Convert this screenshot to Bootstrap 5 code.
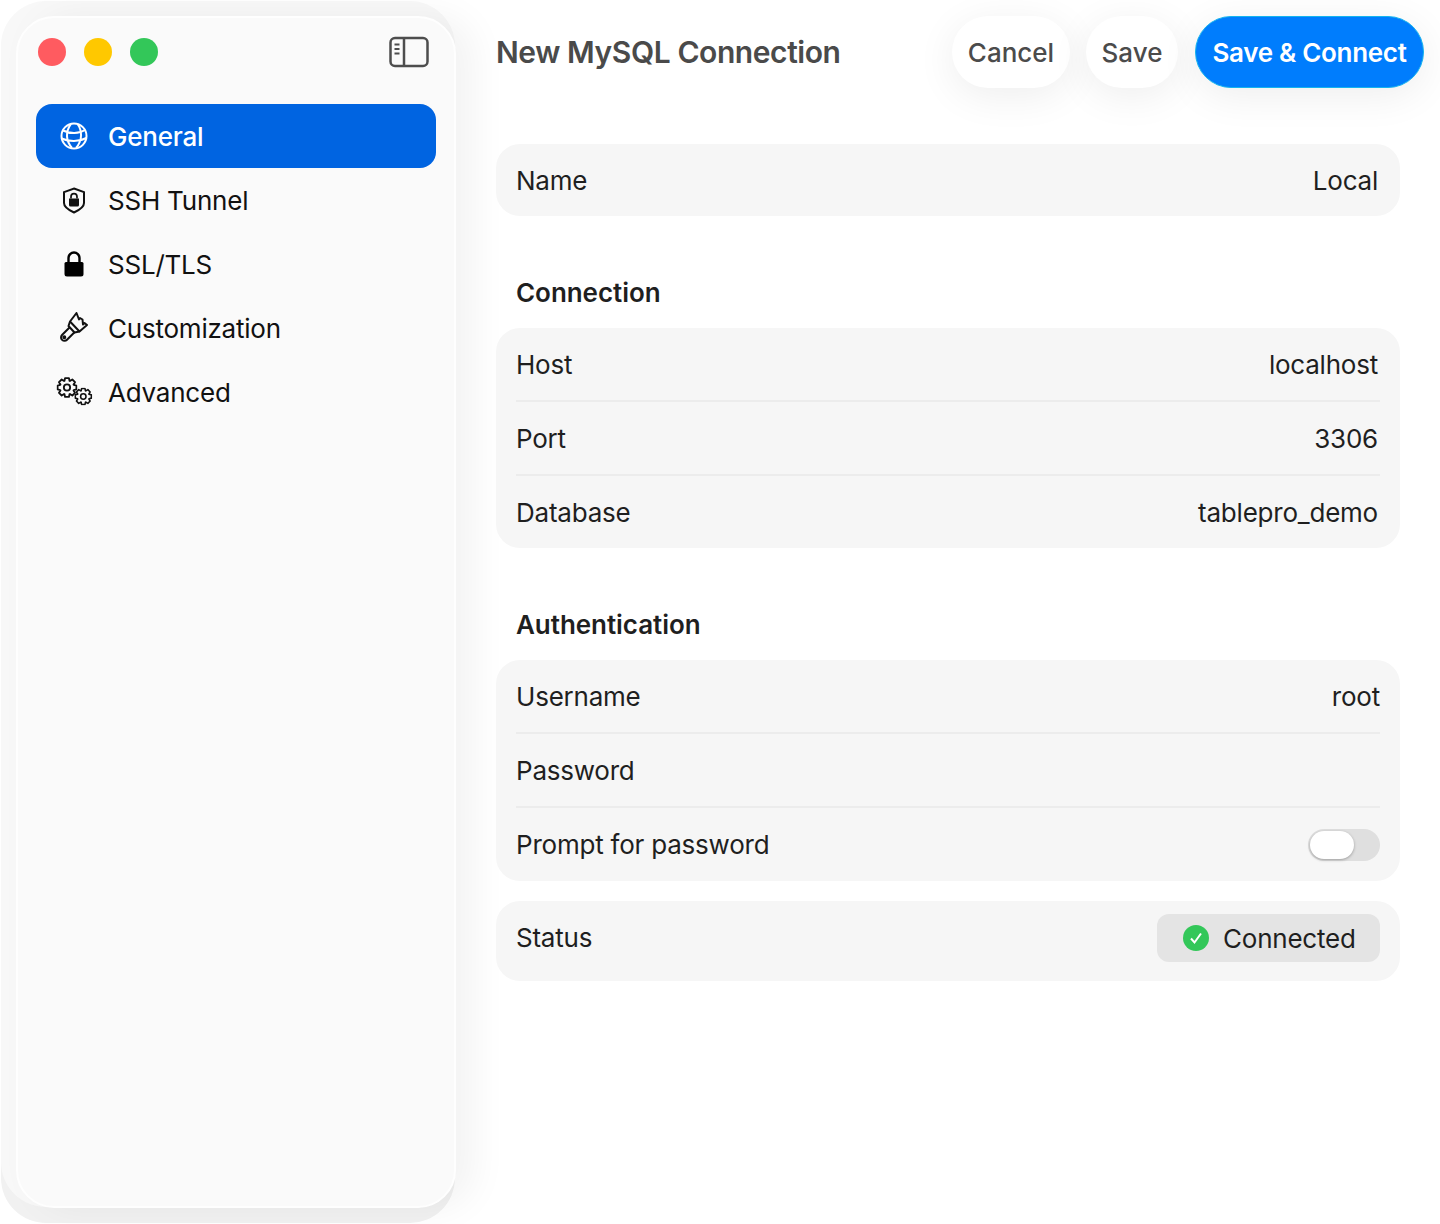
<!DOCTYPE html>
<html lang="en">
<head>
    <meta charset="UTF-8">
    <meta name="viewport" content="width=device-width, initial-scale=1.0">
    <title>New MySQL Connection</title>
    <link href="https://cdn.jsdelivr.net/npm/bootstrap@5.3.0/dist/css/bootstrap.min.css" rel="stylesheet">
    <style>
        body {
            font-family: Inter, "Liberation Sans", sans-serif;
            font-size: 26px;
            letter-spacing: -0.22px;
            color: #1f1f1f;
            background-color: #fff;
            width: 1440px;
            height: 1224px;
            overflow: hidden;
        }

        .sidebar {
            width: 440px;
            height: 1192px;
            margin: 16px 0 16px 16px;
            padding: 18px;
            background-color: #fafafa;
            border: 2px solid #fefefe;
            border-radius: 38px;
            box-shadow: 18px 0 36px rgba(0, 0, 0, .05), -8px -8px 0 7px #f8f8f8, -8px 8px 0 7px #f1f1f1;
        }

        .light {
            width: 28px;
            height: 28px;
            border-radius: 50%;
        }
        .light-red { background-color: #ff5b60; }
        .light-yellow { background-color: #ffc800; }
        .light-green { background-color: #33c759; }
        .lights { gap: 18px; padding-left: 2px; }

        .titlebar { height: 32px; margin-bottom: 36px; padding-right: 7px; }
        .nav-row {
            height: 64px;
            border-radius: 16px;
            color: #111;
            gap: 16px;
            padding-left: 20px;
        }
        .nav-row.active { background-color: #0064e1; color: #fff; font-weight: 500; }
        .nav-icon { width: 36px; height: 36px; flex-shrink: 0; overflow: visible; }

        .content { padding-left: 40px; padding-right: 16px; }
        .top-bar { margin-top: 16px; height: 72px; margin-bottom: 56px; }
        .page-title { font-size: 30px; font-weight: 600; letter-spacing: -0.42px; color: #4a4a4a; margin: 0; }

        .pill {
            height: 72px;
            border-radius: 36px;
            background-color: #fff;
            color: #4b4b4b;
            font-weight: 500;
            border: 0;
            padding: 0;
            white-space: nowrap;
            box-shadow: 0 8px 40px rgba(0, 0, 0, .07);
        }
        .pill-cancel { width: 118px; }
        .pill-save { width: 92px; }
        .pill-primary {
            width: 229px;
            margin-left: 1px;
            background-color: #007dfd;
            color: #fff;
            font-weight: 600;
            letter-spacing: -0.3px;
            border: 1px solid #14b4ee;
        }

        .form-area { margin-right: 24px; }
        .group { background-color: #f6f6f6; border-radius: 24px; }
        .group + .group { margin-top: 20px; }
        .row-line {
            height: 74px;
            margin: 0 20px;
            border-bottom: 2px solid #ececec;
        }
        .row-line:last-child { border-bottom: 0; height: 72px; }
        .row-line.row-73:last-child { height: 73px; }
        .row-line.row-status:last-child { height: 80px; padding-bottom: 6px; }
        .row-status > span { margin-top: -2px; }
        .row-value { padding-right: 2px; }
        .section-title { font-size: 26px; font-weight: 600; letter-spacing: -0.05px; margin: 61px 0 19px 20px; line-height: 32px; }

        .switch-off {
            width: 72px;
            height: 32px;
            border-radius: 16px;
            background-color: #dfdfdf;
            padding: 2px;
        }
        .switch-off span {
            display: block;
            width: 44px;
            height: 28px;
            border-radius: 14px;
            background-color: #fff;
            box-shadow: 0 1px 3px rgba(0, 0, 0, .3);
        }

        .status-chip {
            height: 48px;
            width: 223px;
            border-radius: 12px;
            background-color: #e4e4e4;
            gap: 14px;
            padding-left: 26px;
        }
    </style>
</head>
<body>
    <svg width="0" height="0" class="position-absolute">
        <symbol id="gear" viewBox="-12 -12 24 24">
            <path id="gearPath" fill="none" stroke="currentColor" stroke-width="2.1" stroke-linejoin="round"></path>
            <circle r="3.6" fill="none" stroke="currentColor" stroke-width="2.1"></circle>
        </symbol>
    </svg>

    <div class="d-flex">
        <aside class="sidebar flex-shrink-0">
            <div class="titlebar d-flex align-items-center justify-content-between">
                <div class="lights d-flex">
                    <div class="light light-red"></div>
                    <div class="light light-yellow"></div>
                    <div class="light light-green"></div>
                </div>
                <svg width="40" height="32" viewBox="0 0 40 32" fill="none" stroke="#4d4d4d" stroke-width="2.5">
                    <rect x="1.5" y="2" width="37" height="28" rx="4.5"></rect>
                    <path d="M15 2v28"></path>
                    <path d="M5.5 8.5h5M5.5 13h5M5.5 17.5h5" stroke-width="1.8"></path>
                </svg>
            </div>

            <nav class="d-flex flex-column">
                <div class="nav-row active d-flex align-items-center">
                    <svg class="nav-icon" viewBox="0 0 36 36" fill="none" stroke="currentColor" stroke-width="2">
                        <circle cx="18" cy="18" r="12.500"></circle>
                        <path d="M15 6C9 14 10 23 16 30M21.500 6C26 12 27 22 20 30M7 12.500C14 16 23 16 29 12M5.600 20.500C13 24 23 24 30.400 20"></path>
                    </svg>
                    <span>General</span>
                </div>
                <div class="nav-row d-flex align-items-center">
                    <svg class="nav-icon" viewBox="0 0 36 36" fill="none" stroke="currentColor" stroke-width="2">
                        <path d="M18 6.500l10 3.600v11c0 4-4 6.800-10 9.400-6-2.600-10-5.400-10-9.400v-11z"></path>
                        <path d="M13 16.500h10v6.500a1.500 1.500 0 0 1-1.500 1.500h-7A1.500 1.500 0 0 1 13 23z" fill="currentColor" stroke="none"></path>
                        <path d="M15 16.500v-1.800a3 3 0 0 1 6 0v1.800" stroke-width="1.700"></path>
                    </svg>
                    <span>SSH Tunnel</span>
                </div>
                <div class="nav-row d-flex align-items-center">
                    <svg class="nav-icon" viewBox="0 0 36 36" fill="none" stroke="#000">
                        <path d="M10 16h16a1.500 1.500 0 0 1 1.500 1.500V28a2.500 2.500 0 0 1-2.500 2.500H11A2.500 2.500 0 0 1 8.500 28V17.500A1.500 1.500 0 0 1 10 16z" fill="#000" stroke="none"></path>
                        <path d="M12.500 17v-5a5.500 5.500 0 0 1 11 0v5" stroke-width="2.400"></path>
                    </svg>
                    <span>SSL/TLS</span>
                </div>
                <div class="nav-row d-flex align-items-center">
                    <svg class="nav-icon" viewBox="0 0 36 36" fill="none" stroke="currentColor" stroke-width="2" stroke-linejoin="round">
                        <path d="M20.500 3L14 11.500l9.500 10L31 15l-2.500-2-1.500 1.500-.5-5-2.500-1.500-1 1.500z"></path>
                        <path d="M14 11.500L12.500 16l6 6.500 5-1"></path>
                        <path d="M13.500 17.500L6 25a3.400 3.400 0 0 0 5 4.800l7.500-7.500"></path>
                        <circle cx="8.300" cy="27.300" r="1"></circle>
                    </svg>
                    <span>Customization</span>
                </div>
                <div class="nav-row d-flex align-items-center">
                    <svg class="nav-icon" viewBox="0 0 36 36">
                        <use href="#gear" x="0.500" y="3" width="21" height="21"></use>
                        <use href="#gear" x="18.300" y="13.500" width="18" height="18"></use>
                    </svg>
                    <span>Advanced</span>
                </div>
            </nav>
        </aside>

        <main class="content flex-grow-1">
            <div class="top-bar d-flex align-items-center justify-content-between">
                <h1 class="page-title">New MySQL Connection</h1>
                <div class="d-flex gap-3">
                    <button class="pill pill-cancel">Cancel</button>
                    <button class="pill pill-save">Save</button>
                    <button class="pill pill-primary">Save &amp; Connect</button>
                </div>
            </div>

            <div class="form-area">
                <div class="group">
                    <div class="row-line d-flex align-items-center justify-content-between">
                        <span>Name</span><span class="row-value">Local</span>
                    </div>
                </div>

                <h2 class="section-title">Connection</h2>
                <div class="group">
                    <div class="row-line d-flex align-items-center justify-content-between">
                        <span>Host</span><span class="row-value">localhost</span>
                    </div>
                    <div class="row-line d-flex align-items-center justify-content-between">
                        <span>Port</span><span class="row-value">3306</span>
                    </div>
                    <div class="row-line d-flex align-items-center justify-content-between">
                        <span>Database</span><span class="row-value">tablepro_demo</span>
                    </div>
                </div>

                <h2 class="section-title">Authentication</h2>
                <div class="group">
                    <div class="row-line d-flex align-items-center justify-content-between">
                        <span>Username</span><span>root</span>
                    </div>
                    <div class="row-line d-flex align-items-center justify-content-between">
                        <span>Password</span>
                    </div>
                    <div class="row-line row-73 d-flex align-items-center justify-content-between">
                        <span>Prompt for password</span>
                        <div class="switch-off"><span></span></div>
                    </div>
                </div>

                <div class="group">
                    <div class="row-line row-status d-flex align-items-center justify-content-between">
                        <span>Status</span>
                        <div class="status-chip d-flex align-items-center">
                            <svg width="26" height="26" viewBox="0 0 26 26">
                                <circle cx="13" cy="13" r="13" fill="#33c759"></circle>
                                <path d="M8 13.500l3.500 4L18 8.500" fill="none" stroke="#fff" stroke-width="2"></path>
                            </svg>
                            <span>Connected</span>
                        </div>
                    </div>
                </div>
            </div>
        </main>
    </div>

    <script>
        // outline of an 8 tooth gear
        const points = [];
        for (let i = 0; i < 8; i++) {
            const a = i * Math.PI / 4;
            [[8.2, -0.36], [11, -0.2], [11, 0.2], [8.2, 0.36]].forEach(([r, d]) => {
                points.push((r * Math.cos(a + d)).toFixed(2) + ' ' + (r * Math.sin(a + d)).toFixed(2));
            });
        }
        document.getElementById('gearPath').setAttribute('d', 'M' + points.join('L') + 'Z');
    </script>
</body>
</html>
